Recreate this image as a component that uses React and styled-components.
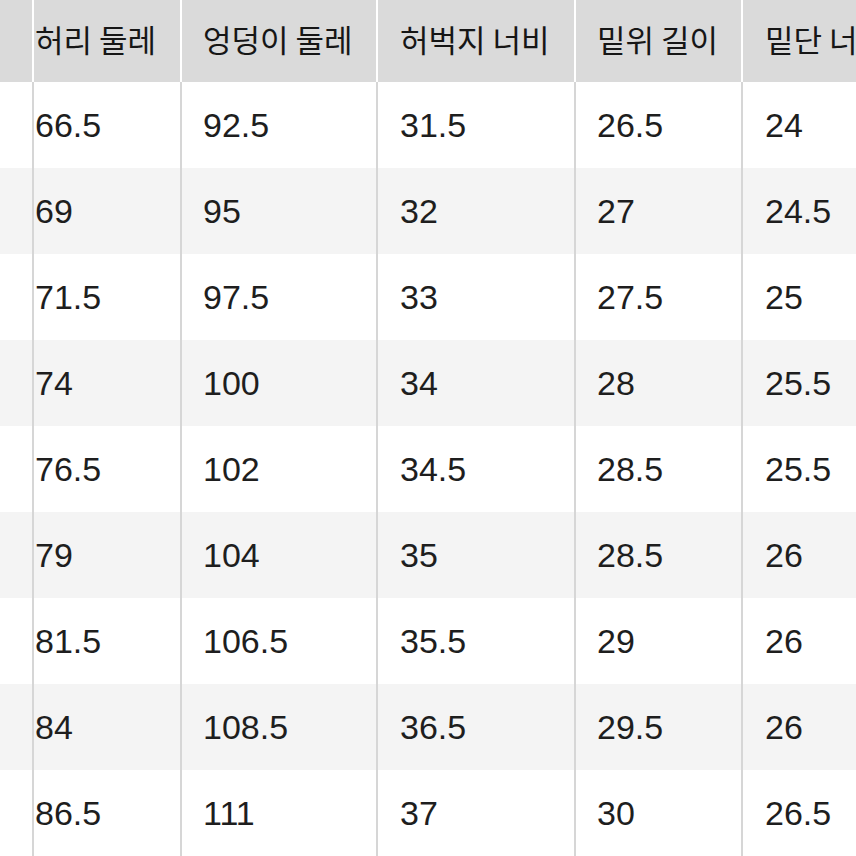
import styled, { createGlobalStyle } from 'styled-components'

const GlobalStyle = createGlobalStyle`
  html, body {
    margin: 0;
    padding: 0;
    background: #ffffff;
    overflow: hidden;
  }
`

const COLUMNS = '32px 2px 146px 2px 194px 2px 196px 2px 165px 2px 1fr'

const Table = styled.div`
  width: 856px;
  height: 856px;
  overflow: hidden;
  display: flex;
  flex-direction: column;
  font-family: "Liberation Sans", "Noto Sans CJK KR", sans-serif;
  color: #1c1c1c;
`

const Row = styled.div`
  display: grid;
  grid-template-columns: ${COLUMNS};
  height: ${(p) => (p.$header ? 82 : 86)}px;
  flex-shrink: 0;
  background: ${(p) => (p.$header ? '#ffffff' : p.$alt ? '#f4f4f4' : '#ffffff')};
`

const Cell = styled.div`
  display: flex;
  align-items: center;
  padding-left: ${(p) => p.$pad}px;
  padding-bottom: ${(p) => (p.$header ? 6 : 0)}px;
  white-space: nowrap;
  overflow: hidden;
  background: ${(p) => (p.$header ? '#dadada' : 'transparent')};
  font-family: ${(p) =>
    p.$header
      ? '"Noto Sans CJK KR", "Liberation Sans", sans-serif'
      : '"Liberation Sans", "Noto Sans CJK KR", sans-serif'};
  font-size: ${(p) => (p.$header ? 31 : 34)}px;
  font-weight: 400;
  color: ${(p) => (p.$header ? '#161616' : '#1e1e1e')};
`

const Line = styled.div`
  background: ${(p) => (p.$header ? '#ffffff' : '#d6d6d6')};
`

const pads = [0, 1, 21, 22, 21, 22]

const headers = ['', '허리 둘레', '엉덩이 둘레', '허벅지 너비', '밑위 길이', '밑단 너비']

const rows = [
  ['', '66.5', '92.5', '31.5', '26.5', '24'],
  ['', '69', '95', '32', '27', '24.5'],
  ['', '71.5', '97.5', '33', '27.5', '25'],
  ['', '74', '100', '34', '28', '25.5'],
  ['', '76.5', '102', '34.5', '28.5', '25.5'],
  ['', '79', '104', '35', '28.5', '26'],
  ['', '81.5', '106.5', '35.5', '29', '26'],
  ['', '84', '108.5', '36.5', '29.5', '26'],
  ['', '86.5', '111', '37', '30', '26.5'],
]

function TableRow({ cells, header, alt }) {
  const out = []
  cells.forEach((text, i) => {
    if (i > 0) out.push(<Line key={`l${i}`} $header={header} />)
    out.push(
      <Cell key={`c${i}`} $header={header} $pad={pads[i]}>
        {text}
      </Cell>
    )
  })
  return (
    <Row $header={header} $alt={alt}>
      {out}
    </Row>
  )
}

export default function App() {
  return (
    <>
      <GlobalStyle />
      <Table>
        <TableRow cells={headers} header />
        {rows.map((r, i) => (
          <TableRow key={i} cells={r} alt={i % 2 === 1} />
        ))}
      </Table>
    </>
  )
}
